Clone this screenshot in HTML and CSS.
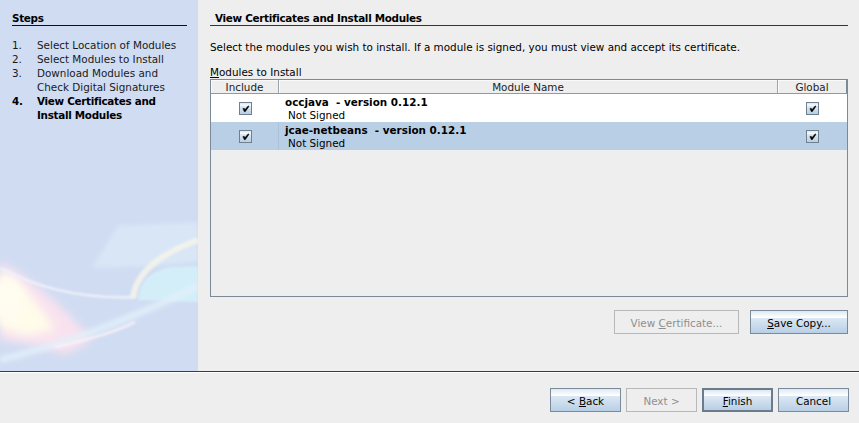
FILE: index.html
```html
<!DOCTYPE html>
<html>
<head>
<meta charset="utf-8">
<link rel="stylesheet" href="styles.css">
</head>
<body>
<div class="window">
  <div class="main">
    <aside class="steps">
      <svg class="art" width="198" height="371" viewBox="0 0 198 371">
        <defs>
          <filter id="b1" x="-20%" y="-20%" width="140%" height="140%"><feGaussianBlur stdDeviation="0.8"/></filter>
          <filter id="b2" x="-20%" y="-20%" width="140%" height="140%"><feGaussianBlur stdDeviation="2"/></filter>
          <filter id="b5" x="-50%" y="-50%" width="200%" height="200%"><feGaussianBlur stdDeviation="5"/></filter>
        </defs>
        <path d="M92 268 L118 226 L198 222 L198 262 L150 266 Z" fill="#dce9f8" opacity="0.8" filter="url(#b2)"/>
        <path d="M138 300 Q140 272 172 267 L198 266 L198 302 Z" fill="#d3eef9" filter="url(#b1)"/>
        <path d="M0 262 Q45 285 92 340 L66 354 Q25 342 0 340 Z" fill="#f9e2ef" filter="url(#b5)"/>
        <path d="M0 270 Q30 288 55 330 L25 336 L0 328 Z" fill="#fffcea" filter="url(#b5)"/>
        <ellipse cx="6" cy="300" rx="18" ry="22" fill="#fffdf0" filter="url(#b5)"/>
        <path d="M0 268 Q60 300 135 297" stroke="#eef2fa" stroke-width="2.5" fill="none" filter="url(#b1)"/>
        <path d="M133 298 Q137 262 198 240" stroke="#f5f4ea" stroke-width="6" opacity="0.85" fill="none" filter="url(#b1)"/>
        <path d="M0 360 Q100 335 198 286" stroke="#e2f0fa" stroke-width="7" opacity="0.8" fill="none" filter="url(#b2)"/>
        <path d="M55 347 Q110 335 135 322" stroke="#fbf2f7" stroke-width="3" opacity="0.8" fill="none" filter="url(#b1)"/>
      </svg>
      <div class="steps-title">Steps</div>
      <ol class="step-list">
        <li><span class="num">1.</span><span>Select Location of Modules</span></li>
        <li><span class="num">2.</span><span>Select Modules to Install</span></li>
        <li><span class="num">3.</span><span>Download Modules and<br>Check Digital Signatures</span></li>
        <li class="current"><span class="num">4.</span><span>View Certificates and<br>Install Modules</span></li>
      </ol>
    </aside>
    <section class="content">
      <div class="title">View Certificates and Install Modules</div>
      <p class="desc">Select the modules you wish to install. If a module is signed, you must view and accept its certificate.</p>
      <div class="label"><u>M</u>odules to Install</div>
      <div class="table">
        <div class="thead">
          <div class="th">Include</div>
          <div class="th">Module Name</div>
          <div class="th last">Global</div>
        </div>
        <div class="row">
          <div class="cell-check"><span class="cb"><svg width="11" height="11" viewBox="0 0 11 11"><path d="M2.8 5.6 L4.2 5.2 L5 6.6 L8.2 2.8 L9 3.4 L5.3 8.7 L4.3 8.7 Z" fill="#000" stroke="#000" stroke-width="0.4" stroke-linejoin="round"/></svg></span></div>
          <div class="cell-name"><div class="mod">occjava  - version 0.12.1</div><div class="sig">Not Signed</div></div>
          <div class="cell-check"><span class="cb"><svg width="11" height="11" viewBox="0 0 11 11"><path d="M2.8 5.6 L4.2 5.2 L5 6.6 L8.2 2.8 L9 3.4 L5.3 8.7 L4.3 8.7 Z" fill="#000" stroke="#000" stroke-width="0.4" stroke-linejoin="round"/></svg></span></div>
        </div>
        <div class="row selected">
          <div class="cell-check"><span class="cb"><svg width="11" height="11" viewBox="0 0 11 11"><path d="M2.8 5.6 L4.2 5.2 L5 6.6 L8.2 2.8 L9 3.4 L5.3 8.7 L4.3 8.7 Z" fill="#000" stroke="#000" stroke-width="0.4" stroke-linejoin="round"/></svg></span></div>
          <div class="cell-name"><div class="mod">jcae-netbeans  - version 0.12.1</div><div class="sig">Not Signed</div></div>
          <div class="cell-check"><span class="cb"><svg width="11" height="11" viewBox="0 0 11 11"><path d="M2.8 5.6 L4.2 5.2 L5 6.6 L8.2 2.8 L9 3.4 L5.3 8.7 L4.3 8.7 Z" fill="#000" stroke="#000" stroke-width="0.4" stroke-linejoin="round"/></svg></span></div>
        </div>
      </div>
      <div class="actions">
        <button class="btn cert" disabled>View <u>C</u>ertificate...</button>
        <button class="btn save"><u>S</u>ave Copy...</button>
      </div>
    </section>
  </div>
  <footer class="footer">
    <button class="btn nav">&lt; <u>B</u>ack</button>
    <button class="btn nav" disabled>Next &gt;</button>
    <button class="btn nav default"><u>F</u>inish</button>
    <button class="btn nav">Cancel</button>
  </footer>
</div>
</body>
</html>
```
FILE: styles.css
```css
html, body {
  margin: 0;
  padding: 0;
  background: #eeeeee;
}
body {
  font-family: "DejaVu Sans", sans-serif;
  font-size: 10.4px;
  color: #000;
}
.window {
  width: 859px;
  height: 423px;
  display: flex;
  flex-direction: column;
  overflow: hidden;
}
.main {
  display: flex;
  height: 371px;
  flex: none;
}
.steps {
  position: relative;
  width: 198px;
  flex: none;
  box-sizing: border-box;
  padding: 12px 11px 0 12px;
  background: #d0dcf2;
  overflow: hidden;
}
.art {
  position: absolute;
  left: 0;
  top: 0;
}
.steps-title {
  position: relative;
  font-weight: bold;
  line-height: 13px;
  letter-spacing: -0.3px;
  border-bottom: 1px solid #111;
}
.step-list {
  position: relative;
  list-style: none;
  margin: 12px 0 0;
  padding: 0;
  line-height: 14.1px;
  color: #1a1a1a;
}
.step-list li {
  display: flex;
}
.step-list .num {
  width: 25px;
  flex: none;
}
.step-list .current {
  font-weight: bold;
  letter-spacing: -0.3px;
  color: #000;
}
.content {
  flex: 1;
  display: flex;
  flex-direction: column;
  padding: 12px 11px 0 12px;
}
.title {
  font-weight: bold;
  line-height: 13px;
  letter-spacing: -0.3px;
  padding-left: 5px;
  border-bottom: 1px solid #333;
}
.desc {
  margin: 14px 0 0;
  line-height: 14px;
}
.label {
  margin-top: 12px;
  line-height: 13px;
}
.label u {
  text-underline-offset: 1px;
}
.table {
  height: 218px;
  box-sizing: border-box;
  border: 1px solid #7a8a99;
  background: #eeeeee;
}
.thead,
.row {
  display: grid;
  grid-template-columns: 68px 1fr 69px;
}
.th {
  height: 12px;
  padding-top: 1px;
  line-height: 12px;
  text-align: center;
  border-right: 1px solid #9aa6b2;
  border-bottom: 1px solid #8e9aa7;
  box-shadow: inset 1px 1px 0 #fafafa;
  color: #222;
}
.th.last {
  border-right: 1px solid #7a8a99;
}
.row {
  height: 28px;
  background: #ffffff;
}
.row.selected {
  background: #b8cfe5;
}
.row.selected .cell-check:first-child {
  box-shadow: inset -1px 0 0 #aac2da;
}
.cell-check {
  display: flex;
  align-items: center;
  justify-content: center;
}
.cb {
  width: 13px;
  height: 13px;
  box-sizing: border-box;
  border: 1px solid #6f8091;
  background: linear-gradient(#dde8f3, #ffffff 30%, #dde8f3 31%, #b8cfe5);
  display: flex;
}
.cell-name {
  padding: 2px 0 0 6px;
  line-height: 13px;
  white-space: pre;
}
.mod {
  font-weight: bold;
}
.sig {
  padding-left: 3px;
}
.actions {
  display: flex;
  justify-content: flex-end;
  gap: 11px;
  margin-top: 13px;
}
.btn {
  height: 24px;
  box-sizing: border-box;
  border: 1px solid #7a8a99;
  background: linear-gradient(#dde8f3, #ffffff 30%, #dde8f3 31%, #b8cfe5);
  font: inherit;
  color: #000;
  padding: 1px 0 0;
  margin: 0;
}
.btn:disabled {
  background: #eeeeee;
  border-color: #b8b8b8;
  color: #8e8e8e;
}
.btn u {
  text-underline-offset: 1px;
}
.cert {
  width: 125px;
}
.save {
  width: 98px;
}
.footer {
  flex: 1;
  display: flex;
  justify-content: flex-end;
  gap: 5px;
  padding: 16px 10px 0 0;
  border-top: 1px solid #3c3c3c;
  box-shadow: inset 0 1px 0 #ffffff;
  box-sizing: border-box;
}
.nav {
  width: 71px;
}
.nav.default {
  border: 2px solid #6b7b8c;
}
```
